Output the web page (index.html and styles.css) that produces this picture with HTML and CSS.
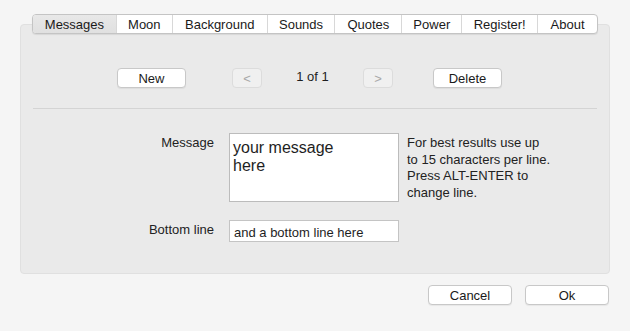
FILE: index.html
```html
<!DOCTYPE html>
<html lang="en">
<head>
  <meta charset="UTF-8" />
  <title>Preferences</title>
  <link rel="stylesheet" href="styles.css">
</head>
<body>
  <div class="window">
    <div class="tabs">
      <div class="tab active">Messages</div>
      <div class="tab">Moon</div>
      <div class="tab">Background</div>
      <div class="tab">Sounds</div>
      <div class="tab">Quotes</div>
      <div class="tab">Power</div>
      <div class="tab">Register!</div>
      <div class="tab">About</div>
    </div>

    <div class="panel">
      <div class="pager">
        <button class="btn btn-wide">New</button>
        <button class="btn btn-arrow" disabled>&lt;</button>
        <div class="counter">1 of 1</div>
        <button class="btn btn-arrow" disabled>&gt;</button>
        <button class="btn btn-wide btn-delete">Delete</button>
      </div>

      <div class="separator"></div>

      <div class="form">
        <label class="label">Message</label>
        <div class="textarea">your message<br>here</div>
        <p class="hint">For best results use up<br>to 15 characters per line.<br>Press ALT-ENTER to<br>change line.</p>

        <label class="label label-bottom">Bottom line</label>
        <div class="input">and a bottom line here</div>
      </div>
    </div>

    <div class="actions">
      <button class="btn btn-action">Cancel</button>
      <button class="btn btn-action">Ok</button>
    </div>
  </div>
</body>
</html>
```

FILE: styles.css
```css
body, html {
  margin: 0;
  padding: 0;
  font-family: "Liberation Sans", Arial, sans-serif;
  font-size: 13px;
  background-color: #f5f5f5;
  color: #1e1e1e;
}
.window {
  width: 630px;
  height: 331px;
  padding-top: 14px;
  box-sizing: border-box;
}
.tabs {
  display: flex;
  justify-content: center;
  position: relative;
  z-index: 1;
  margin: 0 auto -10px;
  width: 566px;
  height: 20px;
  background: #fff;
  border: 1px solid #c4c4c4;
  border-radius: 4px;
  box-sizing: border-box;
  box-shadow: 0 1px 1px rgba(0, 0, 0, 0.08);
  overflow: hidden;
}
.tab {
  line-height: 18px;
  padding-top: 1px;
  text-align: center;
  border-left: 1px solid #d8d8d8;
  color: #1a1a1a;
}
.tab:first-child {
  border-left: none;
}
.tab.active {
  background: linear-gradient(#e8e8e8, #e0e0e0);
}
.tab:nth-child(1) { width: 83px; }
.tab:nth-child(2) { width: 55px; }
.tab:nth-child(3) { width: 94px; }
.tab:nth-child(4) { width: 67px; }
.tab:nth-child(5) { width: 66px; }
.tab:nth-child(6) { width: 59px; }
.tab:nth-child(7) { width: 75px; }
.tab:nth-child(8) { width: 59px; }
.panel {
  margin: 0 20px;
  height: 250px;
  background-color: #eaeaea;
  border: 1px solid #e0e0e0;
  border-radius: 4px;
  box-sizing: border-box;
  padding-top: 43px;
}
.pager {
  display: flex;
  align-items: center;
  padding-left: 96px;
}
.btn {
  font-family: "Liberation Sans", Arial, sans-serif;
  font-size: 13px;
  height: 20px;
  padding: 0;
  background: #fff;
  color: #1a1a1a;
  border: 1px solid #c8c8c8;
  border-radius: 4px;
  box-shadow: 0 1px 1px rgba(0, 0, 0, 0.06);
}
.btn-wide {
  width: 69px;
}
.btn-arrow {
  width: 30px;
  background: #f0f0f0;
  color: #a8a8a8;
  border-color: #dcdcdc;
  box-shadow: none;
  margin-left: 46px;
}
.counter {
  width: 101px;
  text-align: center;
  padding-bottom: 3px;
}
.counter + .btn-arrow {
  margin-left: 0;
}
.btn-delete {
  margin-left: 40px;
}
.separator {
  height: 1px;
  background: #d4d4d4;
  margin: 20px 12px 0;
}
.form {
  display: grid;
  grid-template-columns: 193px 170px 1fr;
  column-gap: 15px;
  margin-top: 24px;
}
.label {
  text-align: right;
  padding-top: 2px;
  color: #222;
}
.textarea {
  height: 69px;
  background: #fff;
  border: 1px solid #bcbcbc;
  box-sizing: border-box;
  padding: 5px 3px;
  font-size: 16px;
  line-height: 18px;
}
.hint {
  margin: 2px 0 0 -7px;
  line-height: 16.7px;
  color: #222;
}
.label-bottom {
  margin-top: 18px;
}
.input {
  margin-top: 18px;
  height: 22px;
  background: #fff;
  border: 1px solid #c4c4c4;
  box-sizing: border-box;
  padding: 4px 4px 0;
  line-height: 16px;
}
.actions {
  display: flex;
  justify-content: flex-end;
  gap: 13px;
  margin: 11px 21px 0 0;
}
.btn-action {
  width: 84px;
}
```
